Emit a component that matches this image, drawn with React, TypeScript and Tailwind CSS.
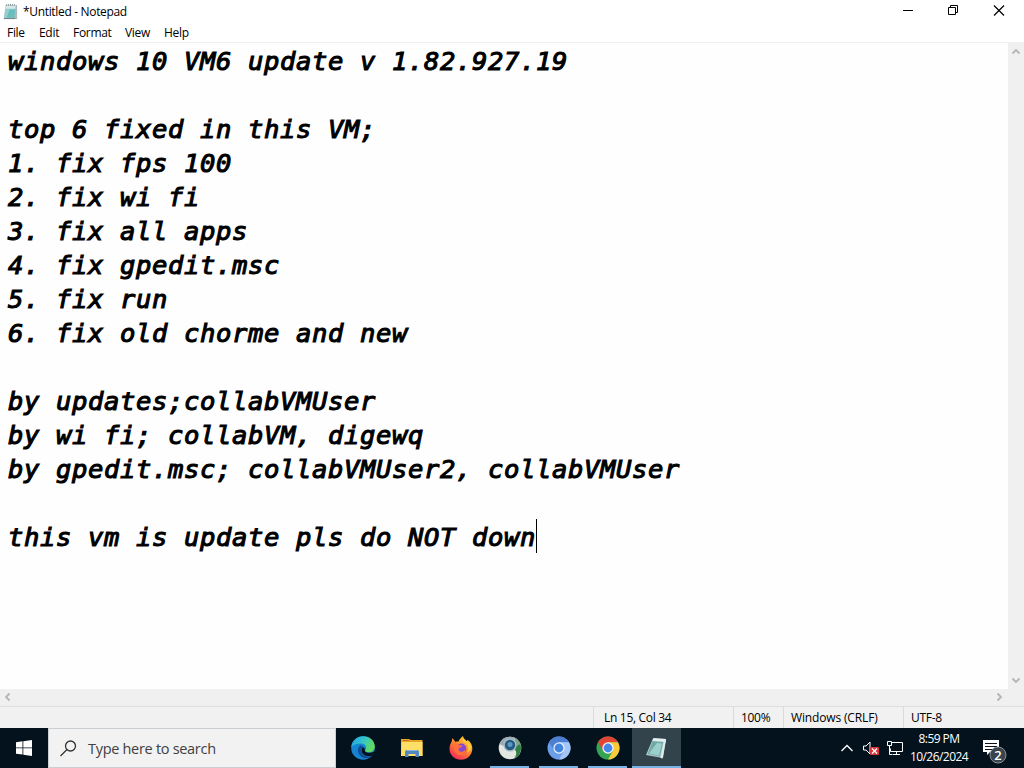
import type { ReactNode } from 'react'

const LINES = [
  'windows 10 VM6 update v 1.82.927.19',
  '',
  'top 6 fixed in this VM;',
  '1. fix fps 100',
  '2. fix wi fi',
  '3. fix all apps',
  '4. fix gpedit.msc',
  '5. fix run',
  '6. fix old chorme and new',
  '',
  'by updates;collabVMUser',
  'by wi fi; collabVM, digewq',
  'by gpedit.msc; collabVMUser2, collabVMUser',
  '',
  'this vm is update pls do NOT down',
]

const MENU = [
  { label: 'File', width: 'w-8' },
  { label: 'Edit', width: 'w-[34px]' },
  { label: 'Format', width: 'w-[52px]' },
  { label: 'View', width: 'w-[39px]' },
  { label: 'Help', width: 'w-10' },
]

function NotepadIcon({ className }: { className: string }) {
  return (
    <svg viewBox="0 0 16 18" className={className}>
      <path d="M3 2h12v15H1z" fill="#a9b9bd" />
      <path d="M3 2.5h10.5l-1.500 13H1.200z" fill="#8fd0d0" />
      <path d="M3 2.500h10.500l-.4 3.500H2.600z" fill="#d8e8e8" />
      <path d="M7 7h6l-1 8.500H4z" fill="#69bdbd" />
      <path d="M4 1v2M6 1v2M8 1v2M10 1v2M12 1v2" stroke="#65787c" strokeWidth=".8" />
      <path d="M1 16.500h12" stroke="#6c7f84" />
    </svg>
  )
}

function Chevron({ d }: { d: string }) {
  return (
    <svg viewBox="0 0 10 10" className="size-2.5">
      <path d={d} fill="none" stroke="#b4b4b4" strokeWidth="1.8" />
    </svg>
  )
}

function TitleBar() {
  return (
    <div className="flex h-[23px] items-start pt-[3px] pl-[2px]">
      <NotepadIcon className="h-[17px] w-[17px]" />
      <span className="ml-1 text-[12px] leading-[18px] tracking-[-0.33px]">*Untitled - Notepad</span>
      <svg width="126" height="20" viewBox="0 0 126 20" fill="none" stroke="#000" className="-mt-[3px] ml-auto">
        <path d="M5 10.5h10" />
        <path d="M50.5 7.5h7v7h-7zM52.5 7.5v-2h7v7h-2" />
        <path d="M96 5.500l10 10M106 5.500l-10 10" strokeWidth="1.200" />
      </svg>
    </div>
  )
}

function TaskButton({ children, bar, active }: { children: ReactNode; bar?: string; active?: boolean }) {
  return (
    <div className={`relative flex h-10 w-[49px] items-center justify-center ${active ? 'bg-[#33434c]' : ''}`}>
      {children}
      {bar && <div className={`absolute bottom-0 h-0.5 bg-[#76b3e6] ${bar}`} />}
    </div>
  )
}

function EdgeIcon() {
  return (
    <svg viewBox="0 0 24 24" className="size-6">
      <defs>
        <linearGradient id="edgeTop" x1="0" y1="0" x2="1" y2=".4">
          <stop offset="0" stopColor="#229dde" />
          <stop offset=".5" stopColor="#2fc3cf" />
          <stop offset="1" stopColor="#62db5c" />
        </linearGradient>
      </defs>
      <circle cx="12" cy="12" r="11.8" fill="#1683d0" />
      <path d="M.3 11C1 4.500 6 .2 12 .2c7 0 11.800 4.800 11.800 10.200 0 3.800-2.800 5.900-6 5.900-2.400 0-4.200-.8-3.700-1.700 2.500-3.200.3-7.200-4-7.200C5.500 7.400 2 9 .3 11z" fill="url(#edgeTop)" />
      <path d="M9.500 9.500c-3 2-3.400 6-1 9.300 2.800 3.900 8 4.200 12.100 1.200-5.500 1.600-10.300-1-10.500-5.500 0-1.700.8-3 1.600-3.700-.5-.8-1.300-1.300-2.200-1.300z" fill="#114b94" />
      <path d="M13.800 14.700c1 2.500 5.500 3 9.600.5-.4 1.700-1.200 3.300-2.500 4.500-4.500 1.500-9.700-.5-10.300-4.700-.1-1.700.4-3 1.200-3.900 1.700.8 2.400 2.200 2 3.600z" fill="#03121d" />
    </svg>
  )
}

function FolderIcon() {
  return (
    <svg viewBox="0 0 24 22" className="h-[22px] w-6">
      <path d="M1 2h8l2 1h11.500v16H1z" fill="#e5a526" />
      <path d="M1.500 5h21v14H1z" fill="#ffdf68" />
      <path d="M3 3.500h6" stroke="#d06b2b" />
      <path d="M5 20v-5q0-2 2-2h10q2 0 2 2v5h-3.500v-3h-7v3z" fill="#5489c0" />
      <path d="M7 13.500h10" stroke="#86b6dd" />
    </svg>
  )
}

function FirefoxIcon() {
  return (
    <svg viewBox="0 0 24 24" className="size-6">
      <defs>
        <linearGradient id="fox" x1=".85" y1="0" x2=".2" y2="1">
          <stop offset="0" stopColor="#ffe63d" />
          <stop offset=".45" stopColor="#ff8a2d" />
          <stop offset="1" stopColor="#f5225f" />
        </linearGradient>
      </defs>
      <path d="M2.500 6l1-4 3 4c.8-.4 2-.5 3-.4C10 4 11.500 2 14 0c.2 2.500 2.400 3.500 4 5.500l.5-1.800C22 6 23.500 9.500 23.300 13c-.3 6-5 10.800-11.300 10.800S.5 19 .5 13C.5 10 1.300 7.700 2.500 6z" fill="url(#fox)" />
      <circle cx="12.300" cy="12.500" r="5" fill="#8549d6" />
      <path d="M5 9c3-2 5 .5 8 .5 1 0 0 2-2.500 2.200-2 1.300-.8 4 1.900 4 2.600 0 3-1.300 3.800-2 0 4-3 6-5.800 5.200C6 18 4 13 5 9z" fill="#ff7139" />
      <path d="M14 5.500c5 2 7 6 4 11 3-1 4-3 4-6C21 7 17 5.500 14 2z" fill="#ffce38" />
    </svg>
  )
}

// Chrome style wheel, the three arcs and the hub take their own colours
function WheelIcon({ top, left, right, hub, ring }: { top: string; left: string; right: string; hub: string; ring: string }) {
  return (
    <svg viewBox="0 0 24 24" className="size-6">
      <circle cx="12" cy="12" r="11.500" fill={left} />
      <path d="M2.040 6.250A11.500 11.500 0 0 1 21.960 6.250H12L7.020 14.870z" fill={top} />
      <path d="M21.960 6.250A11.500 11.500 0 0 1 12 23.500L16.980 14.870L12 6.250z" fill={right} />
      <circle cx="12" cy="12" r="5.700" fill={ring} />
      <circle cx="12" cy="12" r="4.400" fill={hub} />
    </svg>
  )
}

function CentBrowserIcon() {
  return (
    <svg viewBox="0 0 24 24" className="size-6">
      <circle cx="12" cy="12" r="11.300" fill="#e4e6e2" />
      <path d="M1.500 8A11.300 11.300 0 0 1 17 2L12 13z" fill="#9aabb2" />
      <path d="M17 2a11.300 11.300 0 0 1-1 20.500c3-4 3-7 0-10z" fill="#2f7e43" />
      <path d="M17 2a11.300 11.300 0 0 1 5.500 6L17 11z" fill="#7fa58c" />
      <circle cx="12" cy="9" r="6.600" fill="#a9bcc6" />
      <circle cx="12" cy="9" r="5.200" fill="#245b84" />
      <circle cx="12" cy="8.500" r="2.500" fill="#5f97bd" />
    </svg>
  )
}

function Tray() {
  return (
    <div className="ml-auto flex h-10 w-[188px] items-center text-white">
      <svg width="70" height="40" viewBox="0 0 70 40" fill="none" stroke="#fff" className="shrink-0">
        <path d="M5.500 23l5.500-5.500 5.500 5.500" strokeWidth="1.300" />
        <path d="M27.500 18h2.500l4-4v12l-4-4h-2.500z" />
        <rect x="34" y="19" width="9" height="8" rx="1" fill="#d9343a" stroke="none" />
        <path d="M36 20.500l5 5M41 20.500l-5 5" strokeWidth="1.400" />
        <path d="M55.500 14.500h11v9H54.500v-3M60.500 23.500v3M57 26.500h7" />
        <path d="M51.500 13.500h4v4h-4zM53.500 17.500v9h3" />
      </svg>
      <div className="ml-[3px] w-[60px] text-center text-[12px] leading-[18px] tracking-[-0.55px] whitespace-nowrap">
        <div>8:59 PM</div>
        <div>10/26/2024</div>
      </div>
      <svg width="30" height="40" viewBox="0 0 30 40" className="ml-3 shrink-0">
        <path d="M2 12h16v12H9l-3 3v-3H2z" fill="#fff" />
        <path d="M4 15.500h12M4 18.500h12M4 21.500h8" stroke="#04131e" />
        <circle cx="17" cy="27" r="8" fill="#3b444b" stroke="#8b9298" />
        <text x="17" y="31.500" textAnchor="middle" fill="#fff" fontSize="13" fontWeight="600">2</text>
      </svg>
    </div>
  )
}

export default function App() {
  return (
    <div className="flex h-[768px] w-[1024px] flex-col overflow-hidden bg-white font-['Open_Sans','Noto_Sans',sans-serif] text-black">
      <TitleBar />
      <div className="flex h-5 items-center border-b border-[#f0f0f0] pl-[7px] text-[12px] tracking-[-0.3px]">
        {MENU.map((item) => (
          <span key={item.label} className={item.width}>{item.label}</span>
        ))}
      </div>

      <div className="flex h-[646px]">
        <div className="flex-1 bg-[#fefefe] pl-2 font-['DejaVu_Sans_Mono',monospace] text-[25.5px] italic leading-[36px] tracking-[0.648px] [-webkit-text-stroke:1.1px_#000]">
          {LINES.map((line, i) => (
            <div key={i} className="flex h-[34px] whitespace-pre">
              {line}
              {i === LINES.length - 1 && <span className="h-[34px] w-px bg-black" />}
            </div>
          ))}
        </div>
        <div className="flex w-4 flex-col items-center justify-between bg-[#f0f0f0] pt-1 pb-1">
          <Chevron d="M1.500 6.500L5 3l3.500 3.500" />
          <Chevron d="M1.500 3.500L5 7l3.500-3.500" />
        </div>
      </div>
      <div className="flex h-[17px] items-start justify-between bg-[#f0f0f0] pt-[3px] pr-5 pl-[3px]">
        <Chevron d="M6.500 1.500L3 5l3.500 3.500" />
        <Chevron d="M3.500 1.500L7 5l-3.500 3.500" />
      </div>

      <div className="flex h-[22px] items-center justify-end border-t border-[#dedede] bg-[#f1f1f1] text-[12px] leading-[21px] tracking-[-0.3px]">
        <div className="w-[140px] border-l border-[#dadada] pl-[10px]">Ln 15, Col 34</div>
        <div className="w-[50px] border-l border-[#dadada] pl-[7px]">100%</div>
        <div className="w-[120px] border-l border-[#dadada] pl-[7px] tracking-[-0.15px]">Windows (CRLF)</div>
        <div className="w-[121px] border-l border-[#dadada] pl-[7px]">UTF-8</div>
      </div>

      <div className="flex h-10 bg-[#03121d]">
        <div className="flex w-12 items-center justify-center">
          <svg viewBox="0 0 16 16" className="size-4" fill="#fff">
            <path d="M0 2.200l6.500-.9v6.200H0zM7.300 1.200L16 0v7.500H7.300zM0 8.300h6.500v6.300L0 13.700zM7.300 8.300H16V16l-8.700-1.200z" />
          </svg>
        </div>
        <div className="flex w-72 items-center border border-[#c9cfd3] bg-[#f2f2f2] pl-[11px] text-[#404040]">
          <svg viewBox="0 0 17 17" className="size-[17px]" fill="none" stroke="#333" strokeWidth="1.300">
            <circle cx="10.500" cy="6" r="5" />
            <path d="M7 9.500L.5 16" />
          </svg>
          <span className="ml-[11px] pt-0.5 text-[14.5px] tracking-[-0.3px]">Type here to search</span>
        </div>
        <div className="ml-0.5 flex">
          <TaskButton><EdgeIcon /></TaskButton>
          <TaskButton><FolderIcon /></TaskButton>
          <TaskButton><FirefoxIcon /></TaskButton>
          <TaskButton bar="inset-x-[5px]"><CentBrowserIcon /></TaskButton>
          <TaskButton bar="inset-x-[5px]">
            <WheelIcon top="#4d7ed2" left="#6d9fe9" right="#a4c5f5" hub="#4285dc" ring="#e5effd" />
          </TaskButton>
          <TaskButton bar="inset-x-[5px]">
            <WheelIcon top="#e34435" left="#36a354" right="#f9ca3c" hub="#4587ed" ring="#f5f5f5" />
          </TaskButton>
          <TaskButton bar="inset-x-0" active>
            <svg viewBox="0 0 24 24" className="size-6">
              <path d="M8 2.500l13 .5-3 19L1 19z" fill="#b6cccc" />
              <path d="M8 4l10.500.8-3.600 15.700L2.500 18z" fill="#6faaa9" />
              <path d="M8.500 2l12.500 1-.5 3L7.500 5z" fill="#e3eeee" />
              <path d="M12 7l5 .5-3 12-10-2z" fill="#9bcfca" />
              <path d="M21 4l-3.500 18.500-2-.5L19 5z" fill="#e4eaea" />
            </svg>
          </TaskButton>
        </div>
        <Tray />
      </div>
    </div>
  )
}
